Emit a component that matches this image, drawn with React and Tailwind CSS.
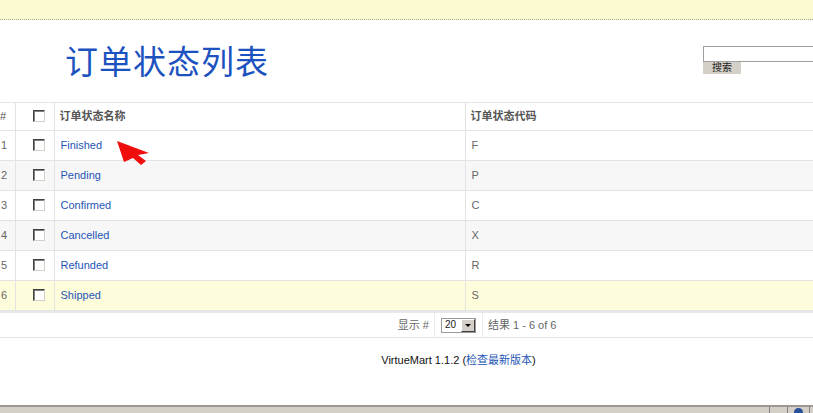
const rows = [
  { id: 1, name: "Finished", code: "F" },
  { id: 2, name: "Pending", code: "P" },
  { id: 3, name: "Confirmed", code: "C" },
  { id: 4, name: "Cancelled", code: "X" },
  { id: 5, name: "Refunded", code: "R" },
  { id: 6, name: "Shipped", code: "S" },
];

function Box() {
  return (
    <span className="inline-block h-[12px] w-[12px] border border-t-[#404040] border-l-[#404040] border-r-[#d4d0c8] border-b-[#d4d0c8] bg-white shadow-[inset_1px_1px_0_#808080]" />
  );
}

export default function App() {
  const font = "font-['Liberation_Sans','Noto_Sans_CJK_SC',sans-serif]";
  return (
    <div className={`relative h-[413px] w-[813px] overflow-hidden bg-white text-[11px] text-[#333] ${font}`}>
      <div className="h-[20px] border-b border-dotted border-[#a8a890] bg-[#fbf9d0]" />

      <div className="flex h-[82px] items-start justify-between">
        <h1 className="ml-[65px] mt-[18px] font-['Noto_Sans_CJK_SC',serif] text-[33px] leading-[44px] font-normal tracking-[1px] text-[#1c52bf]">
          订单状态列表
        </h1>
        <div className="mt-[26px] flex w-[110px] flex-col items-start">
          <input className="h-[16px] w-full border border-[#a0a0a0] border-r-0 bg-white outline-none" />
          <button className="h-[12px] w-[38px] bg-[#d4d0c8] text-[10px] leading-[12px] text-[#222]">
            搜索
          </button>
        </div>
      </div>

      <table className="w-full border-collapse">
        <thead>
          <tr className="h-[28px] border-y border-[#e3e3e3] font-bold text-[#555]">
            <th className="w-[15px] border-r border-[#e3e3e3] text-left font-normal">#</th>
            <th className="w-[39px] border-r border-[#e3e3e3] pl-[17px] text-left">
              <span className="relative top-[2px]"><Box /></span>
            </th>
            <th className="w-[411px] border-r border-[#e3e3e3] pl-[5px] text-left">订单状态名称</th>
            <th className="pl-[5px] text-left">订单状态代码</th>
          </tr>
        </thead>
        <tbody>
          {rows.map((r) => (
            <tr
              key={r.id}
              className={`h-[30px] border-b border-[#e3e3e3] ${
                r.id === 6 ? "bg-[#fdfddc]" : r.id % 2 === 0 ? "bg-[#f7f7f7]" : "bg-white"
              }`}
            >
              <td className="border-r border-[#e3e3e3] pl-[1px] text-[#666]">{r.id}</td>
              <td className="border-r border-[#e3e3e3] pl-[17px] text-left">
                <span className="relative top-[2px]"><Box /></span>
              </td>
              <td className="border-r border-[#e3e3e3] pl-[6px] text-[#1d55b5]">{r.name}</td>
              <td className="pl-[6px] text-[#666]">{r.code}</td>
            </tr>
          ))}
        </tbody>
      </table>

      <div className="flex h-[27px] items-center border-t-2 border-b border-t-[#e8e8e8] border-b-[#e3e3e3] text-[#666]">
        <div className="flex h-full w-[435px] items-center justify-end border-r border-[#ececec] pr-[5px]">
          显示 #
        </div>
        <div className="flex h-full w-[48px] items-center border-r border-[#ececec] pl-[6px]">
          <div className="flex h-[15px] w-[35px] items-center border border-[#9a9a9a] bg-white">
            <span className="flex-1 pl-[3px] text-[10px] leading-none text-[#222]">20</span>
            <span className="flex h-[13px] w-[14px] items-center justify-center border border-t-white border-l-white border-r-[#404040] border-b-[#404040] bg-[#d4d0c8]">
              <span className="h-0 w-0 border-x-[3px] border-t-[3px] border-x-transparent border-t-black" />
            </span>
          </div>
        </div>
        <div className="pl-[5px]">结果 1 - 6 of 6</div>
      </div>

      <div className="mt-[14px] text-center text-[11px] text-[#111]">
        <span className="relative left-[52px]">
          VirtueMart 1.1.2 (<span className="text-[#1d55b5]">检查最新版本</span>)
        </span>
      </div>

      <div className="absolute bottom-0 left-0 flex h-[8px] w-full items-start border-t-2 border-[#9c9890] bg-[#d4d0c8]">
        <div className="flex-1" />
        <div className="h-full w-[18px] border-l border-[#808080]" />
        <div className="h-full w-[22px] border-l border-[#808080]">
          <div className="mx-auto mt-[1px] h-[6px] w-[9px] rounded-t-full bg-[#2a4f9a]" />
        </div>
        <div className="h-full w-[4px] border-l border-[#808080]" />
      </div>

      <svg className="absolute left-[116px] top-[140px]" width="36" height="26" viewBox="0 0 36 26">
        <polygon points="1,1 33,13 22,15 30,21 25,25 17,18 8,22" fill="#f00d0d" />
      </svg>
    </div>
  );
}
